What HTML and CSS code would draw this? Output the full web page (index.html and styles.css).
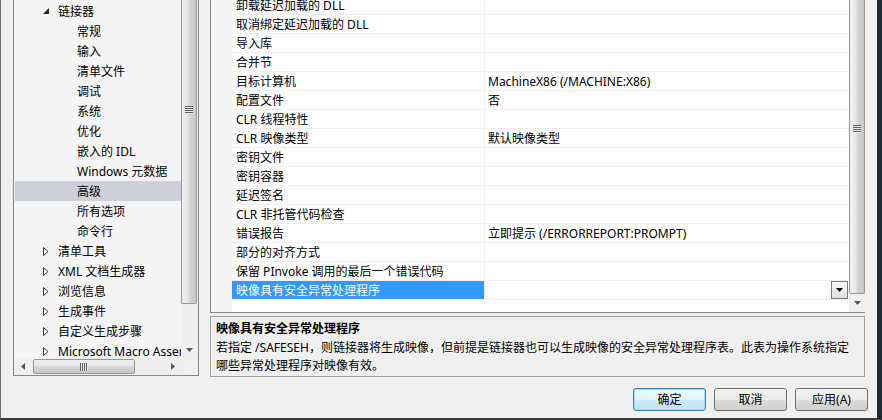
FILE: index.html
```html
<!DOCTYPE html>
<html lang="zh-CN">
<head>
<meta charset="utf-8">
<title>属性页</title>
<link rel="stylesheet" href="styles.css">
</head>
<body>
<div class="win">
  <div class="main">
    <div class="tree">
      <div class="tree-top">
        <div class="tree-list">
          <div class="node l1"><span class="exp"><svg width="7" height="7" viewBox="0 0 7 7"><polygon points="6,0 6,6 0,6" fill="#262626"/></svg></span>链接器</div>
          <div class="node l2">常规</div>
          <div class="node l2">输入</div>
          <div class="node l2">清单文件</div>
          <div class="node l2">调试</div>
          <div class="node l2">系统</div>
          <div class="node l2">优化</div>
          <div class="node l2">嵌入的 IDL</div>
          <div class="node l2">Windows 元数据</div>
          <div class="node l2 sel">高级</div>
          <div class="node l2">所有选项</div>
          <div class="node l2">命令行</div>
          <div class="node l1"><span class="exp"><svg width="6" height="9" viewBox="0 0 6 9"><polygon points="0.5,0.5 5,4.5 0.5,8.5" fill="#fff" stroke="#3a3a3a" stroke-width="1"/></svg></span>清单工具</div>
          <div class="node l1"><span class="exp"><svg width="6" height="9" viewBox="0 0 6 9"><polygon points="0.5,0.5 5,4.5 0.5,8.5" fill="#fff" stroke="#3a3a3a" stroke-width="1"/></svg></span>XML 文档生成器</div>
          <div class="node l1"><span class="exp"><svg width="6" height="9" viewBox="0 0 6 9"><polygon points="0.5,0.5 5,4.5 0.5,8.5" fill="#fff" stroke="#3a3a3a" stroke-width="1"/></svg></span>浏览信息</div>
          <div class="node l1"><span class="exp"><svg width="6" height="9" viewBox="0 0 6 9"><polygon points="0.5,0.5 5,4.5 0.5,8.5" fill="#fff" stroke="#3a3a3a" stroke-width="1"/></svg></span>生成事件</div>
          <div class="node l1"><span class="exp"><svg width="6" height="9" viewBox="0 0 6 9"><polygon points="0.5,0.5 5,4.5 0.5,8.5" fill="#fff" stroke="#3a3a3a" stroke-width="1"/></svg></span>自定义生成步骤</div>
          <div class="node l1"><span class="exp"><svg width="6" height="9" viewBox="0 0 6 9"><polygon points="0.5,0.5 5,4.5 0.5,8.5" fill="#fff" stroke="#3a3a3a" stroke-width="1"/></svg></span>Microsoft Macro Assembler</div>
        </div>
        <div class="vscroll tree-vs">
          <div class="vthumb tree-thumb"><div class="vgrip tree-grip"></div></div>
          <div class="vtrack"></div>
          <div class="varrow"><svg width="7" height="4" viewBox="0 0 7 4"><polygon points="0,0 7,0 3.5,4" fill="#555"/></svg></div>
        </div>
      </div>
      <div class="tree-bottom">
        <div class="hscroll">
          <div class="harrow"><svg width="4" height="7" viewBox="0 0 4 7"><polygon points="4,0 4,7 0,3.5" fill="#555"/></svg></div>
          <div class="hthumb"><div class="hgrip"></div></div>
          <div class="htrack"></div>
          <div class="harrow"><svg width="4" height="7" viewBox="0 0 4 7"><polygon points="0,0 0,7 4,3.5" fill="#555"/></svg></div>
        </div>
        <div class="corner"></div>
      </div>
    </div>

    <div class="right">
      <div class="grid">
        <div class="gutter"></div>
        <div class="rows">
          <div class="rows-in">
            <div class="row"><div class="n">卸载延迟加载的 DLL</div><div class="v"></div></div>
            <div class="row"><div class="n">取消绑定延迟加载的 DLL</div><div class="v"></div></div>
            <div class="row"><div class="n">导入库</div><div class="v"></div></div>
            <div class="row"><div class="n">合并节</div><div class="v"></div></div>
            <div class="row"><div class="n">目标计算机</div><div class="v">MachineX86 (/MACHINE:X86)</div></div>
            <div class="row"><div class="n">配置文件</div><div class="v">否</div></div>
            <div class="row"><div class="n">CLR 线程特性</div><div class="v"></div></div>
            <div class="row"><div class="n">CLR 映像类型</div><div class="v">默认映像类型</div></div>
            <div class="row"><div class="n">密钥文件</div><div class="v"></div></div>
            <div class="row"><div class="n">密钥容器</div><div class="v"></div></div>
            <div class="row"><div class="n">延迟签名</div><div class="v"></div></div>
            <div class="row"><div class="n">CLR 非托管代码检查</div><div class="v"></div></div>
            <div class="row"><div class="n">错误报告</div><div class="v">立即提示 (/ERRORREPORT:PROMPT)</div></div>
            <div class="row"><div class="n">部分的对齐方式</div><div class="v"></div></div>
            <div class="row"><div class="n">保留 PInvoke 调用的最后一个错误代码</div><div class="v"></div></div>
            <div class="row sel"><div class="n">映像具有安全异常处理程序</div><div class="v"><div class="dd"><svg width="7" height="4" viewBox="0 0 7 4"><polygon points="0,0 7,0 3.5,4" fill="#000"/></svg></div></div></div>
          </div>
        </div>
        <div class="vscroll grid-vs">
          <div class="vthumb grid-thumb"><div class="vgrip grid-grip"></div></div>
          <div class="vtrack"></div>
          <div class="varrow"><svg width="7" height="4" viewBox="0 0 7 4"><polygon points="0,0 7,0 3.5,4" fill="#555"/></svg></div>
        </div>
      </div>
      <div class="desc">
        <div class="desc-title">映像具有安全异常处理程序</div>
        <div class="desc-body">若指定 /SAFESEH，则链接器将生成映像，但前提是链接器也可以生成映像的安全异常处理程序表。此表为操作系统指定<br>哪些异常处理程序对映像有效。</div>
      </div>
    </div>
  </div>

  <div class="buttons">
    <div class="btn def">确定</div>
    <div class="btn">取消</div>
    <div class="btn">应用(A)</div>
  </div>
</div>
</body>
</html>
```

FILE: styles.css
```css
* { box-sizing: border-box; }
html, body { margin: 0; padding: 0; }
body {
  width: 882px;
  height: 420px;
  overflow: hidden;
  background: #f0f0f0;
  font-family: "Noto Sans", "Noto Sans CJK SC", sans-serif;
  font-size: 12px;
  color: #000;
}
.win {
  width: 882px;
  height: 420px;
  border-left: 1px solid #6e6e6e;
  border-right: 5px solid #1d2a34;
  border-bottom: 2px solid #3c3c3c;
  display: flex;
  flex-direction: column;
}
.main {
  display: flex;
  gap: 11px;
  padding-left: 12px;
  height: 377px;
}

/* tree */
.tree {
  width: 186px;
  height: 376px;
  border: 1px solid #828790;
  border-top: none;
  background: #f5f5f5;
  display: flex;
  flex-direction: column;
}
.tree-top { display: flex; height: 358px; }
.tree-list {
  flex: 1;
  overflow: hidden;
  padding-top: 1px;
  white-space: nowrap;
}
.node { height: 20px; line-height: 22px; }
.l1 { padding-left: 29px; }
.l2 { padding-left: 63px; }
.node.sel { background: #cdcfdb; margin-left: 1px; padding-left: 62px; }
.exp {
  display: inline-flex;
  align-items: center;
  width: 15px;
  height: 20px;
  vertical-align: top;
}

/* vertical scrollbars */
.vscroll {
  display: flex;
  flex-direction: column;
  background: #efefef;
}
.tree-vs { width: 17px; }
.grid-vs { width: 16px; }
.vthumb {
  border: 1px solid #979797;
  border-top: none;
  border-radius: 0 0 2px 2px;
  background: linear-gradient(to right, #f1f1f1 0%, #e4e4e4 45%, #d3d3d3 55%, #c8c8c8 100%);
  display: flex;
  justify-content: center;
}
.tree-thumb { width: 16px; height: 304px; }
.grid-thumb { width: 16px; height: 294px; }
.vgrip {
  width: 8px;
  height: 8px;
  background: repeating-linear-gradient(to bottom, #5f5f5f 0 1px, #eaeaea 1px 2px);
}
.tree-grip { margin-top: 106px; }
.grid-grip { margin-top: 125px; }
.vtrack { flex: 1; }
.varrow {
  height: 17px;
  display: flex;
  align-items: center;
  justify-content: center;
}
.grid-vs .varrow { height: 18px; }

/* horizontal scrollbar */
.tree-bottom { display: flex; height: 17px; }
.hscroll {
  flex: 1;
  display: flex;
  align-items: stretch;
  background: #efefef;
}
.harrow {
  width: 17px;
  display: flex;
  align-items: center;
  justify-content: center;
}
.hthumb {
  width: 102px;
  margin: 1px 0 1px 2px;
  border: 1px solid #979797;
  border-radius: 2px;
  background: linear-gradient(to bottom, #f1f1f1 0%, #e4e4e4 45%, #d3d3d3 55%, #c8c8c8 100%);
  display: flex;
  align-items: center;
  justify-content: center;
}
.hgrip {
  width: 8px;
  height: 8px;
  background: repeating-linear-gradient(to right, #5f5f5f 0 1px, #eaeaea 1px 2px);
}
.htrack { flex: 1; }
.corner { width: 17px; background: #f0f0f0; }

/* property grid */
.right {
  width: 655px;
  display: flex;
  flex-direction: column;
}
.grid {
  height: 313px;
  display: flex;
  border-left: 1px solid #828790;
  border-bottom: 1px solid #828790;
  background: #fff;
}
.gutter { width: 21px; background: #f5f5f5; }
.rows {
  width: 617px;
  background: #fff;
  overflow: hidden;
}
.rows-in { margin-top: -4px; }
.row {
  display: flex;
  height: 19px;
  border-bottom: 1px solid #edf0f6;
  white-space: nowrap;
}
.n {
  width: 253px;
  border-right: 1px solid #edf0f6;
  padding-left: 4px;
  padding-top: 1px;
  line-height: 17px;
  overflow: hidden;
}
.v {
  flex: 1;
  display: flex;
  padding-left: 3px;
  padding-top: 1px;
  line-height: 17px;
}
.row.sel .v { padding-top: 0; }
.row.sel .n { background: #3399ff; color: #fff; }
.dd {
  margin-left: auto;
  margin-right: 1px;
  width: 17px;
  height: 18px;
  border: 1px solid #7a7a7a;
  background: linear-gradient(to bottom, #f6f6f6, #dedede);
  display: flex;
  align-items: center;
  justify-content: center;
}

/* description */
.desc {
  margin-top: 3px;
  height: 61px;
  border: 1px solid #a0a0a0;
  padding: 2px 0 0 5px;
  background: #f0f0f0;
}
.desc-title { font-weight: bold; line-height: 20px; }
.desc-body { line-height: 18px; white-space: nowrap; }

/* buttons */
.buttons {
  display: flex;
  justify-content: flex-end;
  gap: 8px;
  padding-right: 9px;
  margin-top: 11px;
}
.btn {
  width: 73px;
  height: 23px;
  border: 1px solid #707070;
  border-radius: 3px;
  background: linear-gradient(to bottom, #f2f2f2 0%, #ebebeb 50%, #dddddd 51%, #cfcfcf 100%);
  display: flex;
  align-items: center;
  justify-content: center;
  line-height: 1;
}
.btn.def {
  border-color: #3c7fb1;
  background: linear-gradient(to bottom, #eef8fe 0%, #e3f3fd 50%, #cdebfc 51%, #bfe3f8 100%);
  box-shadow: inset 0 0 0 1px #9fdcf9;
}
```
